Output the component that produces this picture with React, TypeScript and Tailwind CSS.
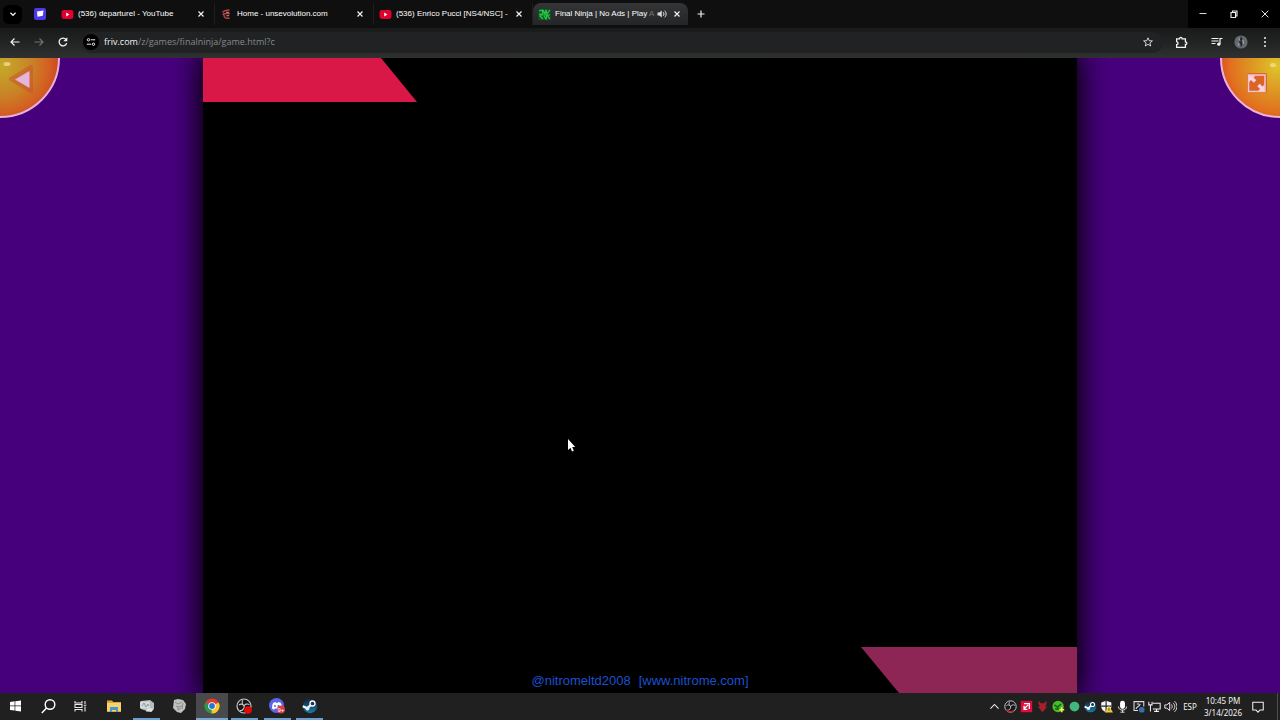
import type { ReactNode } from "react";

type BoxProps = { size?: number; view?: string; children: ReactNode; className?: string };

function Icon({ size = 16, view = "0 0 16 16", children, className = "" }: BoxProps) {
  return (
    <svg width={size} height={size} viewBox={view} fill="none" aria-hidden="true" className={"shrink-0 " + className}>
      {children}
    </svg>
  );
}

const Close = () => (
  <Icon size={8} view="0 0 8 8">
    <path d="M1.500 1.500l5 5M6.500 1.500l-5 5" stroke="#f1f1f1" strokeWidth="1.200" />
  </Icon>
);

const YouTube = () => (
  <Icon size={13} view="0 0 13 13">
    <rect x="0.500" y="2" width="12" height="9" rx="2.400" fill="#e0002f" />
    <path d="M5.200 4.600v3.800L8.400 6.500z" fill="#fff" />
  </Icon>
);

const Evolution = () => (
  <Icon size={13} view="0 0 13 13">
    <path d="M2.500 4.200c2-2 4-2 7-2.200M3 6.200c2-1 4-1 7-.6M4 7c0 3 2 3.600 5.600 3M4 5l-1 2" stroke="#b8434c" strokeWidth="1.500" />
    <path d="M6 4.200l3 .2M6.400 7.800l2.800-.2" stroke="#e3a08a" strokeWidth="0.900" />
  </Icon>
);

const Friv = () => (
  <Icon size={13} view="0 0 13 13">
    <rect x="0.500" y="1" width="12" height="11" rx="1" fill="#0d5a20" />
    <path d="M1 3l3-1 1 3-3 3 3 3M5 2l2 4 1-4 1 4 3-4M6 8l2 3 1-4 3 4M1 6l4 1h7" stroke="#2fc64c" strokeWidth="1.200" />
  </Icon>
);

function Tab({ icon, title, active, audio }: { icon: ReactNode; title: string; active?: boolean; audio?: boolean }) {
  return (
    <div
      className={
        active
          ? "flex h-[22px] w-[155px] items-center rounded-t-lg bg-linear-to-b from-[#343536] to-[#242526] pr-[7px] pl-[5px]"
          : "flex h-[22px] w-[159px] items-center border-r border-[#1e1e1e] pr-[9px] pl-[5px]"
      }
    >
      {icon}
      <a href="#" className="ml-1 min-w-0 flex-1 font-['Liberation_Sans',sans-serif] text-[8px] leading-4 whitespace-nowrap text-white">
        {title}
        {audio && <span className="text-[#77797a]"> A</span>}
      </a>
      {audio && (
        <Icon size={10} view="0 0 10 10" className="mr-[6px]">
          <path d="M0.500 3.600h1.800L4.800 1.500v7L2.300 6.400H.5z" fill="#d8d8d8" />
          <path d="M6.200 3.200c1 1 1 2.600 0 3.600M7.600 1.700c2 1.800 2 4.800 0 6.600" stroke="#e8e8e8" />
        </Icon>
      )}
      <button aria-label={"Close " + title}>
        <Close />
      </button>
    </div>
  );
}

function TabStrip() {
  return (
    <div className="flex h-[28px] items-center bg-[#0f0f0f]">
      <button aria-label="Search tabs" className="ml-[3px] flex h-[19px] w-[19px] items-center justify-center rounded-md bg-black">
        <Icon size={8} view="0 0 8 8">
          <path d="M1.400 2.800L4 5.300l2.600-2.500" stroke="#f0f0f0" strokeWidth="1.200" />
        </Icon>
      </button>
      <button aria-label="Pinned tab" className="ml-3 flex w-[22px] items-center">
        <Icon size={12} view="0 0 12 12">
          <rect width="12" height="12" rx="2" fill="#4b38e8" />
          <path d="M3 3.600l6.500-1-.7 5.200-5.300 1z" fill="#fff" />
        </Icon>
      </button>
      <Tab icon={<YouTube />} title="(536) departurel - YouTube" />
      <Tab icon={<Evolution />} title="Home - unsevolution.com" />
      <Tab icon={<YouTube />} title="(536) Enrico Pucci [NS4/NSC] -" />
      <Tab icon={<Friv />} title="Final Ninja | No Ads | Play" active audio />
      <button aria-label="New tab" className="ml-[5px] p-1">
        <Icon size={8} view="0 0 8 8">
          <path d="M4 .5v7M.5 4h7" stroke="#f0f0f0" strokeWidth="1.200" />
        </Icon>
      </button>
      <div className="ml-auto flex h-full bg-black">
        <button aria-label="Minimize" className="flex w-[30px] items-center justify-center">
          <Icon size={8} view="0 0 8 8"><path d="M.5 3.500h7" stroke="#d8d8d8" /></Icon>
        </button>
        <button aria-label="Restore" className="flex w-[31px] items-center justify-center">
          <Icon size={8} view="0 0 8 8">
            <path d="M1 2.500h4.500v5H1zM2.500 2.500V1H7v5H5.500" stroke="#ededed" strokeWidth="1.100" />
          </Icon>
        </button>
        <button aria-label="Close window" className="flex w-[31px] items-center justify-center">
          <Icon size={8} view="0 0 8 8"><path d="M.7.7l6.600 6.600M7.300.7L.7 7.300" stroke="#fff" strokeWidth=".9" /></Icon>
        </button>
      </div>
    </div>
  );
}

function Toolbar() {
  return (
    <div className="flex h-[30px] items-center bg-linear-to-b from-[#191a1a] via-[#222424] to-[#303030] pb-[2px]">
      <button aria-label="Back" className="ml-[9px]">
        <Icon size={12} view="0 0 12 12"><path d="M10.500 6H2.200M5.500 2.500L2 6l3.500 3.500" stroke="#f0f0f0" strokeWidth="1.200" /></Icon>
      </button>
      <button aria-label="Forward" className="ml-3">
        <Icon size={12} view="0 0 12 12"><path d="M1.500 6h8.300M6.500 2.500L10 6 6.500 9.500" stroke="#717171" strokeWidth="1.200" /></Icon>
      </button>
      <button aria-label="Reload" className="ml-3">
        <Icon size={12} view="0 0 12 12">
          <path d="M9.700 7.300A3.900 3.900 0 1 1 9 3.400" stroke="#f4f4f4" strokeWidth="1.300" />
          <path d="M10.300 1.200v4H6.300z" fill="#f4f4f4" />
        </Icon>
      </button>
      <form className="ml-3 flex h-[21px] flex-1 items-center rounded-full bg-[#202223] pr-[10px] pl-[2px]">
        <button type="button" aria-label="Site information" className="flex h-4 w-4 items-center justify-center rounded-full bg-black">
          <Icon size={10} view="0 0 10 10">
            <circle cx="2.500" cy="2.800" r="1.200" stroke="#ededed" />
            <path d="M4.800 2.800h4.400M.8 7.200h4.400" stroke="#ededed" />
            <circle cx="7.500" cy="7.200" r="1.200" stroke="#ededed" />
          </Icon>
        </button>
        <a href="#" className="ml-[5px] font-['Open_Sans','Noto_Sans',sans-serif] text-[9px] leading-4 text-[#868888]">
          <span className="font-medium text-[#f2f2f2]">friv.com</span>/z/games/finalninja/game.html?c
        </a>
        <button type="button" aria-label="Bookmark" className="ml-auto">
          <Icon size={10} view="0 0 10 10">
            <path d="M5 .8l1.200 2.900 3.200.2-2.500 2 .8 3.100L5 7.300 2.300 9l.8-3.100-2.500-2 3.200-.2z" stroke="#e4e4e4" strokeWidth=".9" />
          </Icon>
        </button>
      </form>
      <button aria-label="Extensions" className="ml-3">
        <Icon size={13} view="0 0 12 12">
          <path d="M1.500 2.600h2.700c0-1.800 2.400-1.800 2.400 0h3v2.900c1.800 0 1.800 2.200 0 2.200v2.800H1.500V8c1.800-.2 1.800-2.600 0-2.800z" stroke="#f4f4f4" strokeWidth="1.200" />
        </Icon>
      </button>
      <button aria-label="Media controls" className="ml-[23px]">
        <Icon size={12} view="0 0 12 12">
          <path d="M.5 2.500h7M.5 5h7M.5 7.500h4M9 8V2.500h2.500" stroke="#f4f4f4" strokeWidth="1.200" />
          <circle cx="7.800" cy="8.200" r="1.600" fill="#f4f4f4" />
        </Icon>
      </button>
      <button aria-label="Profile" className="ml-[11px]">
        <Icon size={14} view="0 0 14 14">
          <circle cx="7" cy="7" r="6.600" fill="#66696e" />
          <path d="M7 1.500c2 1.500 1.500 3 .5 4.500l1 3-1.500 3.500-1-4-1-2z" fill="#25282d" />
          <path d="M5 3l1 3M9 5l.5 4M4 8l1 3" stroke="#9da1a7" />
        </Icon>
      </button>
      <button aria-label="Browser menu" className="mr-[9px] ml-[11px]">
        <Icon size={12} view="0 0 12 12">
          <circle cx="6" cy="2" r="1" fill="#eee" /><circle cx="6" cy="6" r="1" fill="#eee" /><circle cx="6" cy="10" r="1" fill="#eee" />
        </Icon>
      </button>
    </div>
  );
}

function Game() {
  return (
    <main className="relative flex min-h-0 flex-1 justify-center overflow-hidden bg-[#46007c]">
      <section aria-label="Final Ninja" className="flex w-[68.300%] flex-col justify-between bg-black shadow-[0_0_26px_4px_#000]">
        <svg width="214" height="44" viewBox="0 0 214 44" aria-hidden="true"><path d="M0 0h178l36 44H0z" fill="#d91848" /></svg>
        <div className="grid grid-cols-[1fr_auto_1fr] items-end">
          <p className="col-start-2 mb-1 flex gap-2 font-['Liberation_Sans',sans-serif] text-[13px] leading-4 text-[#1c50d0]">
            <span>@nitromeltd2008</span>
            <a href="#">[www.nitrome.com]</a>
          </p>
          <svg width="216" height="46" viewBox="0 0 216 46" aria-hidden="true" className="justify-self-end">
            <path d="M0 0h216v46H38z" fill="#8d2655" />
          </svg>
        </div>
      </section>
      <button aria-label="Back to games" className="absolute top-0 left-0">
        <svg width="61" height="61" viewBox="0 0 61 61" aria-hidden="true">
          <defs>
            <radialGradient id="orbLeft" gradientUnits="userSpaceOnUse" cx="2" cy="8" r="58">
              <stop offset="0" stopColor="#c5a928" /><stop offset=".5" stopColor="#c88427" /><stop offset=".8" stopColor="#d46022" /><stop offset="1" stopColor="#c94725" />
            </radialGradient>
          </defs>
          <circle cx="0" cy="0" r="59" fill="url(#orbLeft)" stroke="#e9b0dc" strokeWidth="2" />
          <path d="M11 21L31 9v24z" fill="#cf582f" stroke="#c9502b" strokeWidth="4" strokeLinejoin="round" opacity=".5" />
          <path d="M15 21.500L29.500 13v17z" fill="#e4b4df" />
          <ellipse cx="7" cy="6" rx="3.500" ry="2" fill="#e8cf78" />
        </svg>
      </button>
      <button aria-label="Full screen" className="absolute top-0 right-0">
        <svg width="61" height="61" viewBox="0 0 61 61" aria-hidden="true">
          <defs>
            <radialGradient id="orbRight" gradientUnits="userSpaceOnUse" cx="58" cy="8" r="58">
              <stop offset="0" stopColor="#dfc52a" /><stop offset=".5" stopColor="#dd9022" /><stop offset=".8" stopColor="#e2701f" /><stop offset="1" stopColor="#db4d24" />
            </radialGradient>
          </defs>
          <circle cx="61" cy="0" r="59" fill="url(#orbRight)" stroke="#eeb3d8" strokeWidth="2" />
          <rect x="28" y="15" width="20" height="20" rx="2" fill="#dc6425" />
          <rect x="29.500" y="17" width="16.500" height="16.500" fill="#dc6425" stroke="#f4c5da" strokeWidth="1.500" />
          <path d="M30 17.500h6.500L30 24zM45.500 33h-6.500l6.500-6.500z" fill="#f7d2e2" />
          <path d="M32 19.500l4 4M43.500 31l-4-4" stroke="#f7d2e2" strokeWidth="3.500" />
          <ellipse cx="54" cy="7" rx="3" ry="2" fill="#f0d878" />
        </svg>
      </button>
      <svg width="9" height="14" viewBox="0 0 9 14" aria-hidden="true" className="absolute top-[60%] left-[44.300%]">
        <path d="M1 0v11l2.500-2.300L5 12.500l1.800-.8L5.200 8.100h3z" fill="#fff" />
      </svg>
    </main>
  );
}

const steam = (
  <>
    <defs>
      <linearGradient id="steamFill" x1="0" y1="0" x2="0" y2="16" gradientUnits="userSpaceOnUse"><stop stopColor="#142038" /><stop offset="1" stopColor="#1683ae" /></linearGradient>
    </defs>
    <circle cx="8" cy="8" r="7.200" fill="url(#steamFill)" />
    <path d="M.8 8.200l4.500 2L9.800 6" stroke="#fff" strokeWidth="2.200" />
    <circle cx="10.500" cy="5.500" r="2.500" fill="#1b3552" stroke="#fff" strokeWidth="1.300" />
    <circle cx="5.500" cy="10.500" r="1.900" fill="#e9f0f5" />
  </>
);

const obs = (
  <>
    <circle cx="8" cy="8" r="7" fill="#17171a" stroke="#c9c9c9" strokeWidth="1.200" />
    <path d="M7 2c-1.500 2-1 4.500 1.200 5.800M13.500 6.500C11 5.500 8.600 6 8.200 8.200M4 12.500c2.400.3 4.300-1.500 4.200-4.300M3 7c1.500-1.400 3.500-1.200 5.200 1.200" stroke="#c9c9c9" strokeWidth="1.100" />
  </>
);

const apps: { name: string; running?: boolean; active?: boolean; art: ReactNode }[] = [
  { name: "Start", art: <path d="M2 4l4.600-.7v4.300H2zM7.300 3.200L13 2.400v5.200H7.300zM2 8.300h4.600v4.300L2 11.900zM7.300 8.300H13v5.200l-5.700-.8z" fill="#fff" /> },
  { name: "Search", art: <><circle cx="9" cy="6.500" r="4.800" stroke="#fff" strokeWidth="1.400" /><path d="M5.500 10.100L.8 15" stroke="#fff" strokeWidth="1.500" /></> },
  { name: "Task view", art: <path d="M2 3v2h7V3M2 13.500v-2h7v2M2 6.500h7v3H2zM12 3v3M12 8.500v5M10.800 7.200h2.500" stroke="#e8e8e8" strokeWidth="1.100" /> },
  { name: "File Explorer", art: <><path d="M1 2.500h5l1.200 1.500H15v10H1z" fill="#dca83b" /><path d="M1 5h14v8H1z" fill="#f4d36b" /><path d="M4 9h8v5h-2v-2H6v2H4z" fill="#4699ce" /></> },
  { name: "Monitor", running: true, art: <><path d="M2 3l9-1 4 3v6l-3 3-4-1-6-2z" fill="#b4bbbe" /><path d="M1 3.500h10v7H1z" fill="#d4dadc" /><path d="M3 8l2-3 2 4 2-3 1 2" stroke="#8b999f" /><path d="M8 10.500h6l-1 3H7z" fill="#e2e4e4" /></> },
  { name: "Lion", art: <><path d="M3 2l4-1 5 1 3 4-1 5-4 4-4-1-4-4z" fill="#bfc1c1" /><path d="M4 4l3 2 4-2M5 8l2 1 4-1M7 9v3l3-2M12 5l-1 6" stroke="#8b8d8d" /></> },
  { name: "Chrome", running: true, active: true, art: <><circle cx="8" cy="8" r="7.500" fill="#e33b2e" /><path d="M8 8L1.500 4.200A7.500 7.500 0 0 0 7.600 15.500L11.500 9z" fill="#269a4b" /><path d="M8 8l6.600-3.600A7.500 7.500 0 0 1 7.600 15.500z" fill="#f7cb2e" /><circle cx="8" cy="8" r="3.800" fill="#fff" /><circle cx="8" cy="8" r="2.900" fill="#2875df" /></> },
  { name: "OBS", running: true, art: <>{obs}<circle cx="12" cy="12" r="3.800" fill="#e70909" /></> },
  { name: "Discord", running: true, art: <><circle cx="7.500" cy="7.500" r="7.500" fill="#5865e8" /><path d="M3 10.500c0-3 .7-5 1.500-5.700L6.500 4l.5.800h2l.5-.8 2 .8c.9 1 1.500 3 1.500 5.700L11 11.700l-1-1.200H6l-1 1.200z" fill="#fff" /><circle cx="6" cy="8" r="1" fill="#5865e8" /><circle cx="9.500" cy="8" r="1" fill="#5865e8" /><circle cx="12" cy="11.500" r="4" fill="#d83d4b" /><text x="8.500" y="14" fontSize="6" fontFamily="Liberation Sans" fill="#fff">9+</text></> },
  { name: "Steam", running: true, art: steam },
];

const tray: { name: string; art: ReactNode }[] = [
  { name: "Show hidden icons", art: <path d="M3 10.500l5-5 5 5" stroke="#eee" strokeWidth="1.300" /> },
  { name: "OBS status", art: <>{obs}<path d="M3 12a6.500 6.500 0 0 0 9 1" stroke="#b3272d" strokeWidth="2" /></> },
  { name: "AMD Software", art: <><rect x="1" y="1" width="14" height="14" fill="#e20b3c" /><path d="M5 4.500h6.500V11M10 6L5.500 10.500M5 7v4.500h4" stroke="#fff" strokeWidth="1.600" /></> },
  { name: "Download helper", art: <path d="M3 1l3 3h4l3-3v4l-2 3h3l-6 7-6-7h3L3 5z" fill="#a6202d" /> },
  { name: "Game helper", art: <><circle cx="7.500" cy="8" r="7" fill="#48bd28" /><path d="M3 6l4 3 4-4M4 11h5" stroke="#155b19" strokeWidth="1.800" /><path d="M12 9v6M9 12h6" stroke="#f0ed45" strokeWidth="2" /></> },
  { name: "Connected", art: <circle cx="8" cy="8" r="6" fill="#43b77b" /> },
  { name: "Steam status", art: steam },
  { name: "Windows Security", art: <><path d="M7.500 1L14 3v5c0 3-3 6-6.500 7C4 14 1.500 11 1.500 8V3z" fill="#f5f5f5" /><path d="M7.500 1v14M1.500 7.500H14" stroke="#222" strokeWidth="1.400" /><path d="M11 7l5 8.500H6z" fill="#f2cb2d" /><path d="M11 10v3" stroke="#333" /></> },
  { name: "Microphone", art: <><rect x="5" y="1" width="6" height="10" rx="3" fill="#fff" /><path d="M3 8c0 6 10 6 10 0M8 12v3M5.500 15h5" stroke="#ddd" strokeWidth="1.200" /></> },
  { name: "Display", art: <><path d="M14.500 8V2h-12v11h5M5 11c0-3 5-3 5-6M6 5h3" stroke="#ddd" strokeWidth="1.300" /><circle cx="12" cy="12" r="3.500" fill="#386eaf" /></> },
  { name: "Network", art: <path d="M6 4h9v7H6M10.500 11v3M7.500 14h6M1 2v4h4V2M3 6v8" stroke="#eee" strokeWidth="1.300" /> },
  { name: "Volume", art: <path d="M1 6h2.500L7 3v10l-3.500-3H1zM9 5.500c1.500 1.500 1.500 3.500 0 5M11 3.500c3 2.500 3 6.500 0 9M13 1.500c4 4 4 9 0 13" stroke="#eee" strokeWidth="1.200" /> },
];

function Taskbar() {
  return (
    <footer className="flex h-[27px] items-stretch bg-[#202020]">
      <nav aria-label="Taskbar" className="grid w-[326px] grid-cols-10">
        {apps.map((app) => (
          <button key={app.name} aria-label={app.name} className={"flex flex-col items-center " + (app.active ? "bg-[#484a4b]" : "")}>
            <span className="flex flex-1 items-center"><Icon size={16}>{app.art}</Icon></span>
            <span className={"h-[2px] " + (app.active ? "w-full bg-[#77a8d4]" : app.running ? "w-[27px] bg-[#6c9fd0]" : "w-0")} />
          </button>
        ))}
      </nav>
      <div className="ml-auto flex items-center font-['Noto_Sans','Open_Sans',sans-serif] text-[8px] text-[#f4f4f4]">
        {tray.map((item) => (
          <button key={item.name} aria-label={item.name} className="flex h-full w-4 items-center justify-center">
            <Icon size={13}>{item.art}</Icon>
          </button>
        ))}
        <button className="ml-1 w-4">ESP</button>
        <button className="ml-[6px] w-[38px] text-center leading-3 whitespace-nowrap">10:45 PM<br />3/14/2026</button>
        <button aria-label="Notifications" className="mr-3 ml-[9px]">
          <Icon size={14}><path d="M2 2.500h12v9h-3.800L8 14l-2.200-2.500H2z" stroke="#eee" strokeWidth="1.200" /></Icon>
        </button>
        <span className="mr-[2px] h-full w-px bg-[#4c4c4c]" />
      </div>
    </footer>
  );
}

export default function App() {
  return (
    <div className="flex h-screen flex-col overflow-hidden bg-black">
      <header>
        <TabStrip />
        <Toolbar />
      </header>
      <Game />
      <Taskbar />
    </div>
  );
}
